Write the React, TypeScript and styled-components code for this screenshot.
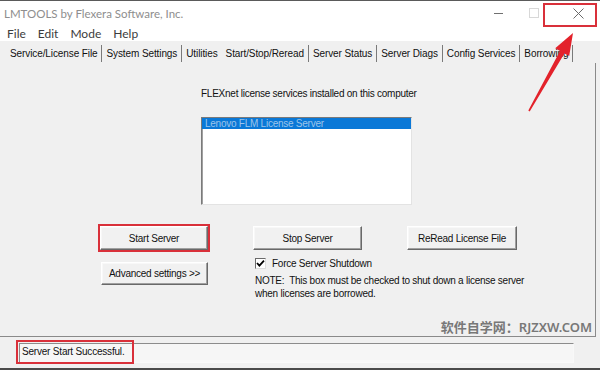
import React from 'react';
import styled, { createGlobalStyle } from 'styled-components';

const dialogFont = `"Liberation Sans", Arial, sans-serif`;
const chromeFont = `Lato, "Noto Sans", sans-serif`;
const annotationRed = '#d9303a';

const GlobalStyle = createGlobalStyle`
  html, body {
    margin: 0;
    padding: 0;
    background: #fff;
  }
  body {
    width: 600px;
    height: 370px;
    overflow: hidden;
  }
`;

const Window = styled.div`
  position: relative;
  width: 600px;
  height: 370px;
  box-sizing: border-box;
  border-top: 1px solid #5a5a5a;
  border-bottom: 2px solid #4a4a4a;
  display: flex;
  flex-direction: column;
  background: #f0f0f0;
  overflow: hidden;
`;

const TitleBar = styled.div`
  height: 24px;
  flex: none;
  display: flex;
  align-items: center;
  padding: 0 2px 0 4px;
  background: #fff;
  font-family: ${chromeFont};
  font-size: 11.5px;
  color: #8e8e8e;
`;

const Title = styled.span`
  flex: 1;
`;

const CaptionButton = styled.div`
  width: 40px;
  height: 24px;
  display: flex;
  align-items: center;
  justify-content: center;
`;

const MinimizeGlyph = styled.span`
  width: 9px;
  height: 1px;
  background: #707070;
`;

const MaximizeGlyph = styled.span`
  width: 8px;
  height: 8px;
  margin-right: 8px;
  border: 1px solid #d8d8d8;
`;

const MenuBar = styled.div`
  height: 16px;
  flex: none;
  display: flex;
  align-items: center;
  gap: 12px;
  padding-left: 7px;
  background: #fff;
  font-family: ${chromeFont};
  font-size: 12px;
  color: #3c3c3c;
`;

const TabStrip = styled.div`
  height: 22px;
  flex: none;
  box-sizing: border-box;
  display: flex;
  align-items: flex-start;
  padding: 4px 0 0 6px;
  font-family: ${dialogFont};
  font-size: 10px;
  letter-spacing: -0.1px;
  color: #111;
`;

const Tab = styled.div<{ $active?: boolean; $noDivider?: boolean }>`
  height: 17px;
  line-height: 17px;
  padding: ${p => (p.$active ? '0 4px 0 3px' : '0 4px')};
  border-right: 1px solid ${p => (p.$noDivider ? 'transparent' : '#7a7a7a')};
  white-space: nowrap;
`;

const Panel = styled.div`
  flex: 1;
  display: flex;
  flex-direction: column;
  margin-right: 4px;
  border-right: 1px solid #8a8a8a;
  border-bottom: 1px solid #8a8a8a;
  padding-top: 24px;
  font-family: ${dialogFont};
  font-size: 10px;
  letter-spacing: -0.25px;
  color: #111;
`;

const ServiceBlock = styled.div`
  margin-left: 201px;
  display: flex;
  flex-direction: column;
`;

const Caption = styled.div`
  height: 14px;
  line-height: 14px;
`;

const ListBox = styled.div`
  margin-top: 16px;
  width: 211px;
  height: 88px;
  box-sizing: border-box;
  background: #fff;
  border: 1px solid;
  border-color: #7a7a7a #e3e3e3 #e3e3e3 #7a7a7a;
  box-shadow: inset 1px 1px 0 #a0a0a0;
`;

const ListItem = styled.div<{ $selected?: boolean }>`
  height: 11px;
  line-height: 11px;
  padding-left: 3px;
  background: ${p => (p.$selected ? '#0a78d7' : 'transparent')};
  color: ${p => (p.$selected ? '#9cc4ea' : '#111')};
`;

const ButtonRow = styled.div<{ $gap: number }>`
  display: flex;
  align-items: flex-start;
  gap: ${p => p.$gap}px;
`;

const FirstRow = styled(ButtonRow)`
  margin: 21px 0 0 100px;
`;

const SecondRow = styled(ButtonRow)`
  margin: 7px 0 0 101px;
`;

const Button = styled.div<{ $w: number; $h?: number; $marked?: boolean }>`
  width: ${p => p.$w}px;
  height: ${p => p.$h ?? 24}px;
  box-sizing: border-box;
  display: flex;
  align-items: center;
  justify-content: center;
  background: #f1f1f1;
  border: 1px solid;
  border-color: #ffffff #696969 #696969 #ffffff;
  box-shadow: inset -1px -1px 0 #a0a0a0, inset 1px 1px 0 #f8f8f8;
  outline: ${p => (p.$marked ? `2px solid ${annotationRed}` : 'none')};
  outline-offset: 0;
  white-space: nowrap;
`;

const AdvancedButton = styled(Button)`
  margin-top: 5px;
`;

const ShutdownBlock = styled.div`
  display: flex;
  flex-direction: column;
`;

const CheckRow = styled.label`
  height: 12px;
  display: flex;
  align-items: center;
  gap: 6px;
`;

const CheckBox = styled.span`
  width: 11px;
  height: 11px;
  box-sizing: border-box;
  display: flex;
  align-items: center;
  justify-content: center;
  background: #fff;
  border: 1px solid;
  border-color: #6a6a6a #dcdcdc #dcdcdc #6a6a6a;
`;

const Note = styled.div`
  margin-top: 5px;
  line-height: 13px;
`;

const Watermark = styled.div`
  margin-top: auto;
  align-self: flex-end;
  margin-right: 3px;
  height: 18px;
  line-height: 18px;
  font-family: "Noto Sans", "Noto Sans CJK SC", sans-serif;
  font-size: 13px;
  font-weight: 600;
  letter-spacing: 0;
  color: #787878;
`;

const StatusBar = styled.div`
  height: 31px;
  flex: none;
  box-sizing: border-box;
  padding: 6px 0 0 19px;
  font-family: ${dialogFont};
  font-size: 10px;
  letter-spacing: -0.2px;
  color: #111;
`;

const StatusField = styled.div`
  width: 555px;
  height: 20px;
  box-sizing: border-box;
  border: 1px solid;
  border-color: #8c8c8c #f8f8f8 #f8f8f8 #8c8c8c;
  background: #f6f6f6;
`;

const StatusText = styled.span`
  display: inline-block;
  height: 16px;
  line-height: 16px;
  padding: 0 6px 0 2px;
  outline: 2px solid ${annotationRed};
  outline-offset: 2px;
`;

const Annotation = styled.svg`
  position: absolute;
  top: -1px;
  left: 0;
  pointer-events: none;
`;

const tabs = [
  'Service/License File',
  'System Settings',
  'Utilities',
  'Start/Stop/Reread',
  'Server Status',
  'Server Diags',
  'Config Services',
  'Borrowing',
];

function CloseGlyph() {
  return (
    <svg width="11" height="11" viewBox="0 0 11 11">
      <path d="M0.5 0.5 L10.5 10.5 M10.5 0.5 L0.5 10.5" stroke="#6a6a6a" strokeWidth="1" fill="none" />
    </svg>
  );
}

function CheckMark() {
  return (
    <svg width="9" height="9" viewBox="0 0 9 9">
      <path d="M1 4 L3.4 6.6 L8 1.6" stroke="#000" strokeWidth="1.8" fill="none" />
    </svg>
  );
}

function App() {
  return (
    <>
      <GlobalStyle />
      <Window>
        <TitleBar>
          <Title>LMTOOLS by Flexera Software, Inc.</Title>
          <CaptionButton><MinimizeGlyph /></CaptionButton>
          <CaptionButton><MaximizeGlyph /></CaptionButton>
          <CaptionButton><CloseGlyph /></CaptionButton>
        </TitleBar>

        <MenuBar>
          <span>File</span>
          <span>Edit</span>
          <span>Mode</span>
          <span>Help</span>
        </MenuBar>

        <TabStrip>
          {tabs.map(t => (
            <Tab key={t} $active={t === 'Start/Stop/Reread'} $noDivider={t === 'Utilities'}>
              {t}
            </Tab>
          ))}
        </TabStrip>

        <Panel>
          <ServiceBlock>
            <Caption>FLEXnet license services installed on this computer</Caption>
            <ListBox>
              <ListItem $selected>Lenovo FLM License Server</ListItem>
            </ListBox>
          </ServiceBlock>

          <FirstRow $gap={45}>
            <Button $w={108} $marked>Start Server</Button>
            <Button $w={109}>Stop Server</Button>
            <Button $w={110}>ReRead License File</Button>
          </FirstRow>

          <SecondRow $gap={47}>
            <AdvancedButton $w={107} $h={23}>Advanced settings &gt;&gt;</AdvancedButton>
            <ShutdownBlock>
              <CheckRow>
                <CheckBox><CheckMark /></CheckBox>
                Force Server Shutdown
              </CheckRow>
              <Note>
                NOTE:&nbsp; This box must be checked to shut down a license server
                <br />
                when licenses are borrowed.
              </Note>
            </ShutdownBlock>
          </SecondRow>

          <Watermark>软件自学网：RJZXW.COM</Watermark>
        </Panel>

        <StatusBar>
          <StatusField>
            <StatusText>Server Start Successful.</StatusText>
          </StatusField>
        </StatusBar>

        <Annotation width="600" height="130" viewBox="0 0 600 130">
          <rect x="544" y="4" width="52" height="22" fill="none" stroke={annotationRed} strokeWidth="2" />
          <polygon
            points="528.3,110.6 560.0,51.0 555.2,48.3 573,33 569.2,56.1 564.4,53.4 529.7,111.4"
            fill="#e3222b"
          />
        </Annotation>
      </Window>
    </>
  );
}

export default App;
